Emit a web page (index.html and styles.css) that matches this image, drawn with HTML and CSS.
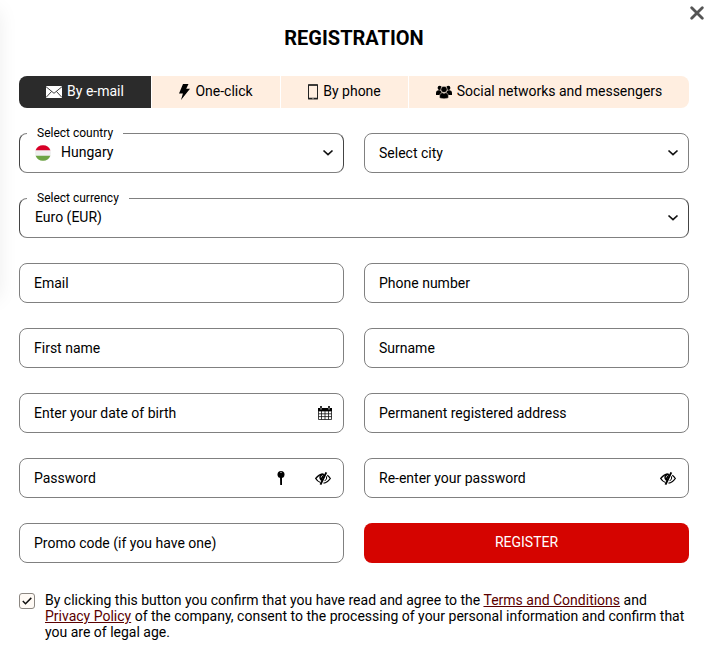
FILE: index.html
```html
<!DOCTYPE html>
<html lang="en">
<head>
  <meta charset="UTF-8">
  <title>Registration</title>
  <link rel="stylesheet" href="styles.css">
</head>
<body>
  <div class="side-shadow"></div>
  <button class="close" aria-label="Close">
    <svg width="14" height="14" viewBox="0 0 14 14"><path d="M1.7 1.7l10.6 10.6M12.3 1.7L1.7 12.3" fill="none" stroke="#555" stroke-width="2.8" stroke-linecap="round"/></svg>
  </button>

  <div class="registration">
    <h1>REGISTRATION</h1>

    <div class="tabs">
      <div class="tab tab-email active">
        <svg width="16" height="12" viewBox="0 0 16 12"><rect width="16" height="12" fill="#fff"/><path d="M0 .7l8 6.600 8-6.600M0 11.500l5.500-6M16 11.500l-5.500-6" fill="none" stroke="#2b2b2b" stroke-width=".9"/></svg>
        <span>By e-mail</span>
      </div>
      <div class="tab tab-click">
        <svg width="11" height="16" viewBox="0 0 11 16"><path d="M4 0h5.500L7.200 4.800H11L2 16l1.900-6.400H0z"/></svg>
        <span>One-click</span>
      </div>
      <div class="tab tab-phone">
        <svg width="10" height="16" viewBox="0 0 10 16"><rect x=".5" y="1" width="9" height="13.800" fill="none" stroke="#222"/><path d="M.3 1h9.400M.3 14.500h9.400" stroke="#222" stroke-width="1.500"/><path d="M4.300 14.700h1.400" stroke="#ffeee0" stroke-width=".7"/></svg>
        <span>By phone</span>
      </div>
      <div class="tab tab-social">
        <svg width="16" height="14" viewBox="0 0 16 14"><circle cx="3.700" cy="2.900" r="2.100"/><circle cx="12.300" cy="2.900" r="2.100"/><path d="M0 10V7.800q0-2.300 2.300-2.500h2L6 8.200 3.500 10zM16 10V7.800q0-2.300-2.300-2.500h-2L10 8.200l2.500 1.800z"/><circle cx="8" cy="4.400" r="3.200" stroke="#ffeee0" stroke-width=".6"/><path d="M3.600 13v-2.200q0-2.800 2.700-3 1.700 1.100 3.400 0 2.700.2 2.700 3V13q-4.400 1.600-8.800 0z" stroke="#ffeee0" stroke-width=".4"/></svg>
        <span>Social networks and messengers</span>
      </div>
    </div>

    <form class="fields">
      <div class="field filled">
        <span class="label">Select country</span>
        <svg class="flag" width="16" height="16" viewBox="0 0 16 16"><circle cx="8" cy="8" r="8" fill="#f0f0f0"/><path d="M.6 5.200a8 8 0 0 1 14.800 0z" fill="#d80027"/><path d="M.6 10.800a8 8 0 0 0 14.800 0z" fill="#6da544"/></svg>
        <span class="value">Hungary</span>
        <svg class="arrow" width="12" height="8" viewBox="0 0 12 8"><path d="M1.500 1.500L6 5.700l4.500-4.200"/></svg>
      </div>
      <div class="field">
        <span>Select city</span>
        <svg class="arrow" width="12" height="8" viewBox="0 0 12 8"><path d="M1.500 1.500L6 5.700l4.500-4.200"/></svg>
      </div>
      <div class="field filled wide">
        <span class="label">Select currency</span>
        <span class="value">Euro (EUR)</span>
        <svg class="arrow" width="12" height="8" viewBox="0 0 12 8"><path d="M1.500 1.500L6 5.700l4.500-4.200"/></svg>
      </div>
      <div class="field"><span>Email</span></div>
      <div class="field"><span>Phone number</span></div>
      <div class="field"><span>First name</span></div>
      <div class="field"><span>Surname</span></div>
      <div class="field">
        <span>Enter your date of birth</span>
        <svg class="calendar" width="14" height="14" viewBox="0 0 14 14"><path d="M.5 5h13v8.500H.5zM3.500 5v8.500M7 5v8.500M10.500 5v8.500M.5 7.800h13M.5 10.600h13" fill="none" stroke="#111" stroke-width=".8"/><path d="M0 5V2h2v1.300h2V2h6v1.300h2V2h2v3z"/><path d="M3 0v2.700M11 0v2.700" stroke="#111" stroke-width="1.700"/></svg>
      </div>
      <div class="field"><span>Permanent registered address</span></div>
      <div class="field">
        <span>Password</span>
        <svg class="key" width="8" height="14" viewBox="0 0 8 14"><circle cx="4" cy="3.500" r="3.500"/><path d="M3 6h2v8H3.200z"/><path d="M3 1.400h2" stroke="#aaa" stroke-width=".8"/></svg>
        <svg class="eye" width="16" height="13" viewBox="0 0 16 13"><path d="M5.500 10.500Q2.500 9.500.7 6.500 4 2 8.500 2M12.300 3.200q1.700 1.200 3 3.300-3 4.300-6.800 4.600" fill="none" stroke="#000" stroke-width="1.300"/><path d="M4.600 3.500q2.500-1.700 5-1.400L6.500 9.300Q3.600 7 4.600 3.500z"/><path d="M11.600 4.300q.8 2.900-2 4.800" fill="none" stroke="#000"/><path d="M11.300.4L5.500 12.600" stroke="#000" stroke-width="1.900"/><path d="M6.100 5.500q.1-1.600 1.600-2.100" fill="none" stroke="#fff" stroke-width=".8"/></svg>
      </div>
      <div class="field">
        <span>Re-enter your password</span>
        <svg class="eye" width="16" height="13" viewBox="0 0 16 13"><path d="M5.500 10.500Q2.500 9.500.7 6.500 4 2 8.500 2M12.300 3.200q1.700 1.200 3 3.300-3 4.300-6.800 4.600" fill="none" stroke="#000" stroke-width="1.300"/><path d="M4.600 3.500q2.500-1.700 5-1.400L6.500 9.300Q3.600 7 4.600 3.500z"/><path d="M11.600 4.300q.8 2.900-2 4.800" fill="none" stroke="#000"/><path d="M11.300.4L5.500 12.600" stroke="#000" stroke-width="1.900"/><path d="M6.100 5.500q.1-1.600 1.600-2.100" fill="none" stroke="#fff" stroke-width=".8"/></svg>
      </div>
      <div class="field"><span>Promo code (if you have one)</span></div>
      <button class="register" type="button">REGISTER</button>
    </form>

    <div class="agreement">
      <span class="checkbox">
        <svg width="10" height="8" viewBox="0 0 10 8"><path d="M.8 4l2.700 2.700L9.300.9" fill="none" stroke="#111" stroke-width="1.500"/></svg>
      </span>
      <p>By clicking this button you confirm that you have read and agree to the <a href="#">Terms and Conditions</a> and <a href="#">Privacy Policy</a> of the company, consent to the processing of your personal information and confirm that you are of legal age.</p>
    </div>
  </div>
</body>
</html>
```
FILE: styles.css
```css
* {
  box-sizing: border-box;
}

body {
  margin: 0;
  height: 671px;
  overflow: hidden;
  background: #fff;
  color: #000;
  font-family: Roboto, sans-serif;
  font-size: 14px;
  line-height: 16px;
}

svg {
  display: block;
  flex: none;
}

.side-shadow {
  position: absolute;
  left: -41px;
  top: 10px;
  width: 40px;
  height: 288px;
  box-shadow: 0 0 20px rgba(0, 0, 0, 0.08);
}

.close {
  position: absolute;
  top: 6px;
  right: 5px;
  padding: 0;
  border: none;
  background: none;
  cursor: pointer;
}

.registration {
  width: 670px;
  margin-left: 19px;
  padding-top: 26px;
}

h1 {
  margin: 0 0 26px;
  font-size: 20px;
  line-height: 24px;
  font-weight: 700;
  text-align: center;
}

.tabs {
  display: grid;
  grid-template-columns: 132px 128px 127px 280px;
  gap: 1px;
  height: 32px;
  border-radius: 8px;
  overflow: hidden;
}

.tab {
  display: flex;
  align-items: center;
  justify-content: center;
  gap: 5px;
  padding-bottom: 2px;
  background: #ffeee0;
  cursor: pointer;
}

.tab svg {
  margin-top: 2px;
}

.tab.active {
  background: #2b2b2b;
  color: #fff;
}

.fields {
  display: grid;
  grid-template-columns: 1fr 1fr;
  gap: 25px 20px;
  margin-top: 25px;
}

.field {
  position: relative;
  display: flex;
  align-items: center;
  height: 40px;
  padding: 0 14px;
  border: 1px solid #808080;
  border-radius: 8px;
}

.field.filled {
  padding-left: 15px;
  border-left-color: #444;
  border-right-color: #444;
}

.wide {
  grid-column: 1 / 3;
}

.label {
  position: absolute;
  top: -9px;
  left: 7px;
  padding: 0 10px;
  background: #fff;
  font-size: 12px;
}

.value {
  padding-bottom: 2px;
}

.flag {
  margin-right: 10px;
}

.arrow {
  margin: 0 -5px 0 auto;
}

.arrow path {
  fill: none;
  stroke: #111;
  stroke-width: 1.7;
}

.calendar {
  margin: 0 -3px 0 auto;
}

.key {
  margin-left: auto;
}

.eye {
  margin: 0 -2px 0 auto;
}

.key + .eye {
  margin-left: 30px;
}

.register {
  height: 40px;
  padding: 0 0 2px;
  border: none;
  border-radius: 8px;
  background: #d50400;
  color: #fff;
  font-family: inherit;
  font-size: 14px;
  cursor: pointer;
}

.agreement {
  display: flex;
  gap: 10px;
  margin-top: 29px;
}

.agreement p {
  margin: 0;
}

.agreement a {
  color: #5a0000;
}

.checkbox {
  display: flex;
  align-items: center;
  justify-content: center;
  flex: none;
  width: 16px;
  height: 16px;
  margin-top: 1px;
  border: 1px solid #8c8782;
  border-radius: 3px;
  background: #fffaf5;
}
```
